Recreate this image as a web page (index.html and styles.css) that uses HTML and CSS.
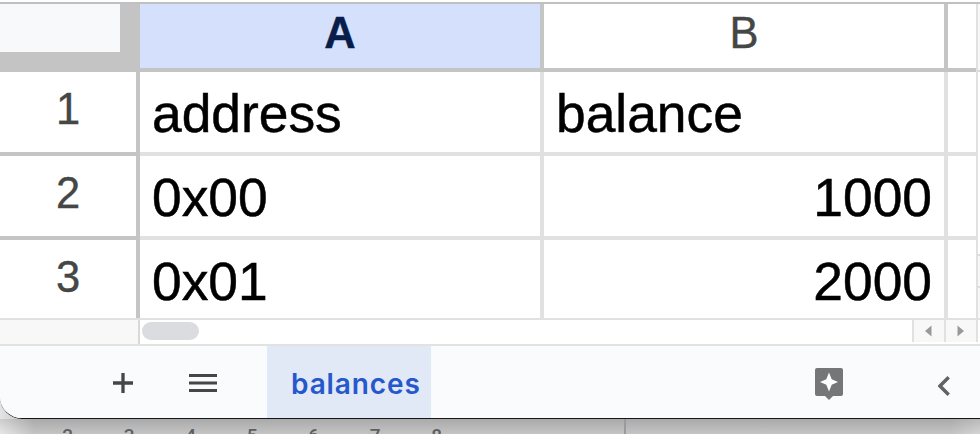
FILE: index.html
```html
<!doctype html>
<html lang="en">
    <head>
        <meta charset="utf-8" />
        <title>balances</title>
        <link rel="stylesheet" href="styles.css">
    </head>
    <body>
        <div class="window">
            <div class="sheet">
                <div class="grid">
                    <div class="corner"></div>
                    <div class="col-header selected">A</div>
                    <div class="col-header">B</div>
                    <div class="col-header last"></div>

                    <div class="row-header">1</div>
                    <div class="cell">address</div>
                    <div class="cell">balance</div>
                    <div class="cell last"></div>

                    <div class="row-header">2</div>
                    <div class="cell">0x00</div>
                    <div class="cell number">1000</div>
                    <div class="cell last"></div>

                    <div class="row-header bottom">3</div>
                    <div class="cell bottom">0x01</div>
                    <div class="cell number bottom">2000</div>
                    <div class="cell last bottom"></div>
                </div>
                <div class="vertical-scroll">
                    <div class="track-top"></div>
                    <div class="track"></div>
                    <div class="track-button"></div>
                    <div class="track-button"></div>
                </div>
            </div>

            <div class="scrollbar">
                <div class="scroll-corner"></div>
                <div class="scroll-track"><div class="thumb"></div></div>
                <div class="scroll-button">
                    <svg width="8" height="12" viewBox="0 0 8 12"><path d="M6.500 .5v11L0 6z" fill="#999" /></svg>
                </div>
                <div class="scroll-button">
                    <svg width="8" height="12" viewBox="0 0 8 12"><path d="M.5 .5v11L7 6z" fill="#999" /></svg>
                </div>
                <div class="scroll-end"></div>
            </div>

            <div class="tabbar">
                <svg class="add" width="20" height="20" viewBox="0 0 20 20">
                    <path d="M0 10h20M10 0v20" stroke="#444746" stroke-width="3.300" />
                </svg>
                <svg class="menu" width="28" height="18" viewBox="0 0 28 18">
                    <path d="M0 1.5h28M0 9h28M0 16.5h28" stroke="#444746" stroke-width="3" />
                </svg>
                <div class="tab">balances</div>
                <svg class="explore" width="28" height="32" viewBox="0 0 28 32">
                    <path d="M2 0h24a2 2 0 0 1 2 2v24a2 2 0 0 1-2 2h-8l-4 4-4-4H2a2 2 0 0 1-2-2V2a2 2 0 0 1 2-2z" fill="#747678" />
                    <path d="M14 4.500l2.700 6.800 6.300 2.700-6.300 2.700L14 23.500l-2.700-6.800L5 14l6.300-2.700z" fill="#fff" />
                </svg>
                <svg class="collapse" width="12" height="20" viewBox="0 0 12 20">
                    <path d="M10.700 1.200L2 10l8.700 8.800" fill="none" stroke="#5f6368" stroke-width="3.400" />
                </svg>
            </div>
        </div>

        <!-- window behind -->
        <div class="backdrop">
            <div class="ruler">
                <span>2</span><span>3</span><span>4</span><span>5</span><span>6</span><span>7</span><span>8</span>
            </div>
            <div class="divider"></div>
        </div>
    </body>
</html>
```

FILE: styles.css
```css
* {
    box-sizing: border-box;
}
body {
    margin: 0;
    width: 980px;
    height: 434px;
    overflow: hidden;
    display: flex;
    flex-direction: column;
    font-family: "Liberation Sans", Arial, sans-serif;
    background: linear-gradient(90deg, #e4e4e4, #b9b9b9 34px, #b9b9b9 950px, #cdcdcd);
}
svg {
    display: block;
}
.window {
    flex: none;
    height: 419px;
    padding-top: 2px;
    background: #fff;
    border-bottom: 1px solid #161616;
    border-bottom-left-radius: 22px;
    overflow: hidden;
}
.sheet {
    display: flex;
    height: 318px;
    border-top: 2px solid #c0c0c0;
    border-bottom: 2px solid #e1e1e1;
}
.grid {
    display: grid;
    grid-template-columns: 140px 404px 404px 28px;
    grid-template-rows: 68px 84px 84px 78px;
}
.corner {
    background: #f8f9fa;
    border-right: 20px solid #c4c4c4;
    border-bottom: 20px solid #c4c4c4;
}
.col-header,
.row-header {
    color: #444746;
    font-size: 43.5px;
    text-align: center;
    border-right: 4px solid #c4c6c5;
    border-bottom: 4px solid #c4c4c4;
}
.col-header {
    line-height: 58px;
    -webkit-text-stroke: 0.4px currentColor;
}
.row-header {
    line-height: 75px;
    -webkit-text-stroke: 0.4px currentColor;
}
.col-header.selected {
    background: #d5e1fc;
    color: #081d49;
    font-weight: bold;
}
.cell {
    padding: 0 12px;
    font-size: 53.333px;
    line-height: 84px;
    color: #000;
    border-right: 4px solid #e1e1e1;
    border-bottom: 4px solid #e1e1e1;
    -webkit-text-stroke: 0.5px currentColor;
}
.number {
    text-align: right;
}
.last {
    border-right: none;
}
.bottom {
    border-bottom: none;
}
.vertical-scroll {
    width: 4px;
    border-left: 2px solid #e1e1e1;
}
.track-top {
    height: 68px;
    background: #f8f8f8;
    border-bottom: 2px solid #d9d9d9;
}
.track {
    height: 182px;
}
.track-button {
    height: 32px;
    background: #f8f8f8;
    border-top: 2px solid #dadce0;
}
.scrollbar {
    display: flex;
    height: 26px;
    padding-bottom: 2px;
    border-bottom: 2px solid #e1e3e1;
}
.scroll-corner {
    width: 140px;
    height: 24px;
    background: #f8f8f8;
    border-right: 2px solid #d9d9d9;
}
.scroll-track {
    flex: 1;
    padding: 2px;
}
.thumb {
    width: 57px;
    height: 18px;
    border-radius: 9px;
    background: #dadce0;
}
.scroll-button {
    display: flex;
    justify-content: center;
    align-items: center;
    width: 32px;
    background: #f8f8f8;
    border-left: 2px solid #e1e1e1;
}
.scroll-end {
    width: 4px;
    border-left: 2px solid #e1e1e1;
}
.tabbar {
    display: flex;
    align-items: center;
    height: 72px;
    padding-left: 113px;
    background: #f9fbfd;
}
.add {
    margin-top: 2px;
}
.menu {
    margin: 2px 50px 0 56px;
}
.tab {
    width: 164px;
    height: 72px;
    padding-left: 24px;
    background: #e1e9f7;
    color: #2657cc;
    font-family: Inter, sans-serif;
    font-size: 28px;
    font-weight: 600;
    line-height: 76px;
    letter-spacing: 0.9px;
}
.explore {
    margin-left: 384px;
    margin-top: 3px;
}
.collapse {
    margin: 7px 0 0 95px;
}
.backdrop {
    display: flex;
    height: 15px;
    background: linear-gradient(rgba(110, 110, 110, 0.2), rgba(255, 255, 255, 0.15));
}
.ruler {
    display: flex;
    width: 624px;
    padding-left: 37px;
    overflow: hidden;
}
.ruler span {
    width: 61.5px;
    padding-top: 7px;
    font-family: Roboto, sans-serif;
    font-size: 19px;
    font-weight: 500;
    line-height: 19px;
    text-align: center;
    color: #5c5f62;
}
.divider {
    width: 2px;
    background: #99999e;
}
```
